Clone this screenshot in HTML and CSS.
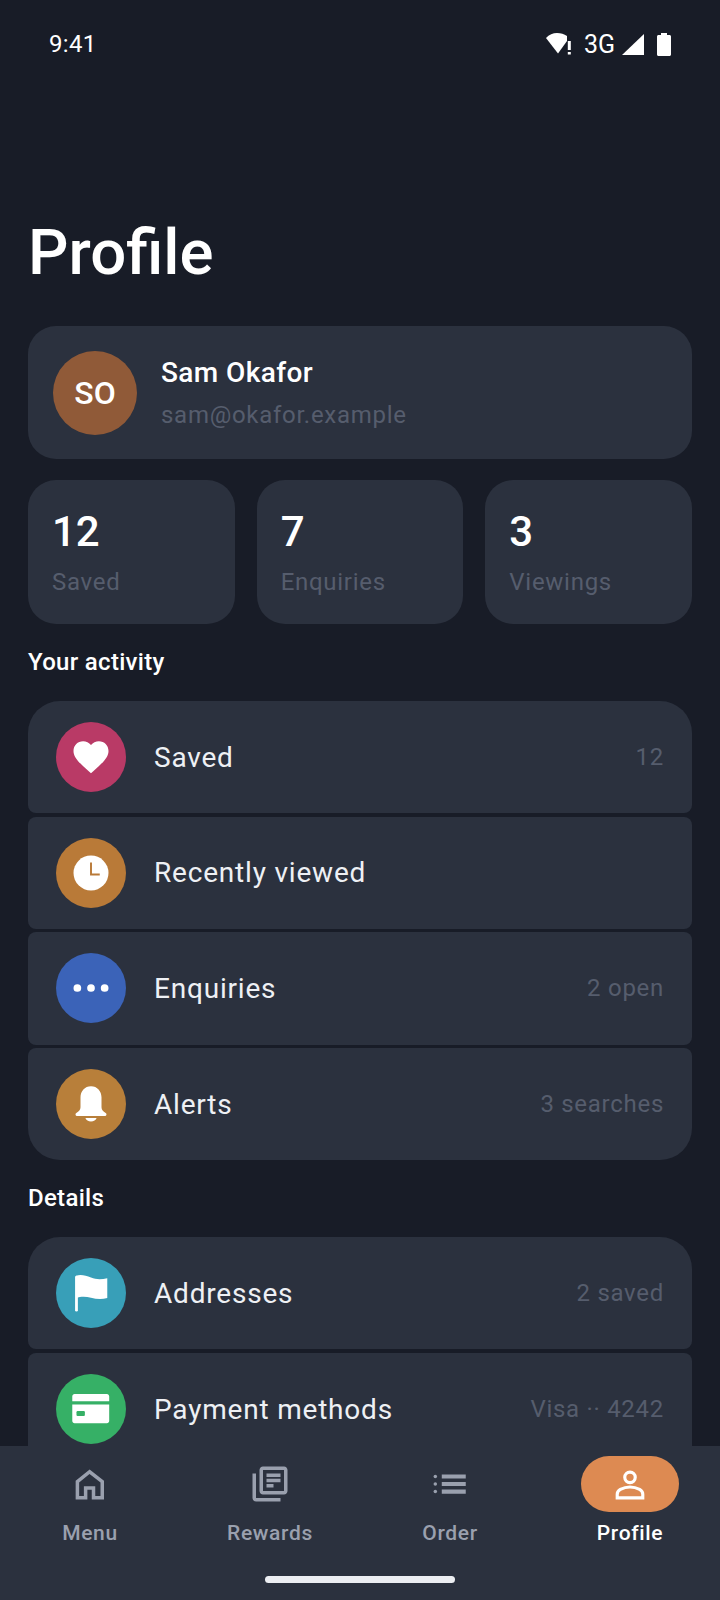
FILE: index.html
```html
<!doctype html>
<html>
<head>
<meta charset="utf-8">
<title>Profile</title>
<link rel="stylesheet" href="styles.css">
</head>
<body>
<div id="wrap">
	<div class="status">
		<span class="time">9:41</span>
		<div class="status_icons">
			<svg class="ic_wifi" width="27" height="24" viewBox="0 0 27 24"><path d="M1 6C4 2.500 8 1 12 1s7 1 10 3v5L13 21.500z" fill="#fff"/><rect x="22.800" y="9" width="3" height="9" fill="#fff"/><rect x="22.800" y="20" width="3" height="2.500" fill="#fff"/></svg>
			<span class="net">3G</span>
			<svg class="ic_signal" width="22" height="21" viewBox="0 0 22 21"><path d="M22 0v21H0z" fill="#fff"/></svg>
			<svg class="ic_batt" width="14" height="23" viewBox="0 0 14 23"><path d="M4 0h6v2h2.500c.8 0 1.500.7 1.500 1.500V21.500c0 .8-.7 1.500-1.500 1.500h-11C.7 23 0 22.300 0 21.500V3.500C0 2.700.7 2 1.500 2H4z" fill="#fff"/></svg>
		</div>
	</div>
	<div id="content">
		<h1>Profile</h1>
		<div class="user_card">
			<div class="avatar">SO</div>
			<div class="user_info">
				<div class="user_name">Sam Okafor</div>
				<div class="user_mail">sam@okafor.example</div>
			</div>
		</div>
		<div class="stats">
			<div class="stat"><b>12</b><span>Saved</span></div>
			<div class="stat"><b>7</b><span>Enquiries</span></div>
			<div class="stat"><b>3</b><span>Viewings</span></div>
		</div>
		<h2>Your activity</h2>
		<ul class="group">
			<li>
				<div class="dot dot_pink"><svg width="42" height="42" viewBox="0 0 24 24"><path d="M12 21.350l-1.450-1.320C5.400 15.360 2 12.280 2 8.500 2 5.420 4.420 3 7.500 3c1.740 0 3.410.81 4.500 2.090C13.090 3.810 14.760 3 16.500 3 19.580 3 22 5.420 22 8.500c0 3.780-3.400 6.860-8.550 11.540z" fill="#fff"/></svg></div>
				<span class="label">Saved</span>
				<span class="meta">12</span>
			</li>
			<li>
				<div class="dot dot_amber"><svg width="42" height="42" viewBox="0 0 24 24"><circle cx="12" cy="12" r="10" fill="#fff"/><path d="M12 6v6.900h5" fill="none" stroke="#b97a38" stroke-width="1.100"/></svg></div>
				<span class="label">Recently viewed</span>
			</li>
			<li>
				<div class="dot dot_blue"><svg width="42" height="42" viewBox="0 0 24 24"><circle cx="4.200" cy="12" r="2.200" fill="#fff"/><circle cx="12" cy="12" r="2.200" fill="#fff"/><circle cx="19.800" cy="12" r="2.200" fill="#fff"/></svg></div>
				<span class="label">Enquiries</span>
				<span class="meta">2 open</span>
			</li>
			<li>
				<div class="dot dot_gold"><svg width="42" height="42" viewBox="0 0 24 24"><path d="M12 1.800c-3.600 0-6 2.800-6 6.400v5.600c0 1.400-.9 2.400-2.400 3.300-.8.5-.5 1.700.4 1.700h16c.9 0 1.200-1.200.4-1.700-1.500-.9-2.400-1.900-2.400-3.300V8.200c0-3.600-2.400-6.400-6-6.400z" fill="#fff"/><path d="M8.800 20h6.400c-.4 1.300-1.700 2-3.200 2s-2.800-.7-3.200-2z" fill="#fff"/></svg></div>
				<span class="label">Alerts</span>
				<span class="meta">3 searches</span>
			</li>
		</ul>
		<h2>Details</h2>
		<ul class="group group_more">
			<li>
				<div class="dot dot_teal"><svg width="42" height="42" viewBox="0 0 24 24"><rect x="2.900" y="2.200" width="1.600" height="20.400" rx=".8" fill="#fff"/><path d="M3.500 2.200C6 1.200 9 2 12 3.200s6 1.200 9.300.3v11.400c-3.300.9-6.300.6-9.300-.2s-6-.8-8.500.2z" fill="#fff"/></svg></div>
				<span class="label">Addresses</span>
				<span class="meta">2 saved</span>
			</li>
			<li>
				<div class="dot dot_green"><svg width="42" height="42" viewBox="0 0 24 24"><path d="M2.600 3.400h18.500c.7 0 1.300.6 1.300 1.300v2.900H1.300V4.700c0-.7.6-1.300 1.300-1.300zM1.300 9.400h21.100v9.400c0 .7-.6 1.300-1.300 1.300H2.600c-.7 0-1.300-.6-1.300-1.300z" fill="#fff"/><rect x="3.700" y="13.200" width="4.800" height="2.800" rx=".6" fill="#36b066"/></svg></div>
				<span class="label">Payment methods</span>
				<span class="meta">Visa ·· 4242</span>
			</li>
		</ul>
	</div>
	<nav>
		<a href="#">
			<i><svg width="42" height="42" viewBox="0 0 24 24"><path d="M4.800 19.800v-9.200L11.800 5l7.200 5.600v9.200h-5v-5.500H9.500v5.500z" fill="none" stroke="#9aa0ae" stroke-width="2"/></svg></i>
			<span>Menu</span>
		</a>
		<a href="#">
			<i><svg width="42" height="42" viewBox="0 0 24 24"><path d="M4 6H2v14c0 1.100.9 2 2 2h14v-2H4zm16-4H8c-1.100 0-2 .9-2 2v12c0 1.100.9 2 2 2h12c1.100 0 2-.9 2-2V4c0-1.100-.9-2-2-2zm0 14H8V4h12zM10 9h8v2h-8zm0 3h4v2h-4zm0-6h8v2h-8z" fill="#9aa0ae"/></svg></i>
			<span>Rewards</span>
		</a>
		<a href="#">
			<i><svg width="42" height="42" viewBox="0 0 24 24"><path d="M7.300 6.600H21v2.300H7.300zm0 4.300H21v2.300H7.300zm0 4.300H21v2.300H7.300z" fill="#9aa0ae"/><circle cx="3.600" cy="7.700" r="1" fill="#9aa0ae"/><circle cx="3.600" cy="12" r="1" fill="#9aa0ae"/><circle cx="3.600" cy="16.300" r="1" fill="#9aa0ae"/></svg></i>
			<span>Order</span>
		</a>
		<a href="#" class="on">
			<i><svg width="42" height="42" viewBox="0 0 24 24"><circle cx="12" cy="8.200" r="3" fill="none" stroke="#fff" stroke-width="1.800"/><path d="M4.700 19.900v-2c0-1.300.7-2.200 1.800-2.800 1.700-.9 3.500-1.400 5.500-1.400s3.800.5 5.500 1.400c1.100.6 1.800 1.500 1.800 2.800v2z" fill="none" stroke="#fff" stroke-width="1.800"/></svg></i>
			<span>Profile</span>
		</a>
		<div class="home_bar"></div>
	</nav>
</div>
</body>
</html>
```

FILE: styles.css
```css
body,h1,h2,div,ul,li,a,span{margin: 0; padding: 0;}
ul{list-style: none;}
a{text-decoration: none;}
html,body{
	width: 720px;
	height: 1600px;
	overflow: hidden;
	background-color: #181c27;
	font-family: Roboto,"Noto Sans",sans-serif;
}
#wrap{
	width: 720px;
	height: 1600px;
	display: flex;
	flex-direction: column;
	overflow: hidden;
}
.status{
	height: 88px;
	flex: none;
	display: flex;
	align-items: center;
	justify-content: space-between;
	padding: 0 49px 0 49px;
	color: #fff;
}
.time{
	font-size: 24px;
	letter-spacing: .3px;
}
.status_icons{
	display: flex;
	align-items: center;
}
.net{
	font-size: 25px;
	margin: 0 7px 0 12px;
}
.ic_batt{
	margin-left: 13px;
}
#content{
	flex: 1;
	min-height: 0;
	overflow: hidden;
	padding: 0 28px;
}
h1{
	height: 238px;
	box-sizing: border-box;
	padding-top: 127px;
	font-size: 63.500px;
	line-height: 76px;
	font-weight: 500;
	color: #fff;
}
.user_card{
	height: 133px;
	display: flex;
	align-items: center;
	gap: 24px;
	padding: 0 25px;
	border-radius: 28px;
	background-color: #2b313e;
}
.avatar{
	width: 84px;
	height: 84px;
	border-radius: 50%;
	background-color: #905a38;
	color: #fff;
	font-size: 32px;
	font-weight: 500;
	line-height: 84px;
	text-align: center;
}
.user_name{
	font-size: 28px;
	font-weight: 500;
	line-height: 36px;
	color: #fff;
	letter-spacing: .4px;
}
.user_mail{
	margin-top: 8px;
	font-size: 24px;
	line-height: 32px;
	color: #565d6d;
	letter-spacing: .72px;
}
.stats{
	display: flex;
	gap: 22px;
	margin-top: 21px;
}
.stat{
	flex: 1;
	height: 144px;
	box-sizing: border-box;
	padding: 27px 24px 0;
	border-radius: 28px;
	background-color: #2b313e;
}
.stat b{
	display: block;
	font-size: 42px;
	line-height: 50px;
	font-weight: 500;
	color: #fff;
}
.stat span{
	display: block;
	margin-top: 9px;
	font-size: 24px;
	line-height: 32px;
	color: #565d6d;
	letter-spacing: .72px;
}
h2{
	height: 77px;
	font-size: 24px;
	font-weight: 500;
	line-height: 76px;
	color: #fff;
	letter-spacing: .3px;
}
.group{
	display: flex;
	flex-direction: column;
	gap: 3.500px;
}
.group li{
	height: 112.200px;
	flex: none;
	display: flex;
	align-items: center;
	padding: 0 28px;
	border-radius: 8px;
	background-color: #2b313e;
}
.group li:first-child{
	border-radius: 32px 32px 8px 8px;
}
.group li:last-child{
	border-radius: 8px 8px 32px 32px;
}
/* list carries on under the nav */
.group_more li:last-child{
	border-radius: 8px;
}
.dot{
	width: 70px;
	height: 70px;
	flex: none;
	border-radius: 50%;
	display: flex;
	align-items: center;
	justify-content: center;
}
.dot_pink{background-color: #b93a66;}
.dot_amber{background-color: #b97a38;}
.dot_blue{background-color: #3b63b8;}
.dot_gold{background-color: #b87f3a;}
.dot_teal{background-color: #389fb8;}
.dot_green{background-color: #36b066;}
.label{
	flex: 1;
	margin-left: 28px;
	font-size: 28px;
	color: #eef0f4;
	letter-spacing: .8px;
}
.meta{
	font-size: 24px;
	color: #565d6d;
	letter-spacing: .72px;
}
nav{
	height: 154px;
	flex: none;
	position: relative;
	display: flex;
	box-sizing: border-box;
	padding-top: 10px;
	background-color: #2b313e;
}
nav a{
	flex: 1;
	display: flex;
	flex-direction: column;
	align-items: center;
}
nav i{
	width: 98px;
	height: 56px;
	border-radius: 28px;
	display: flex;
	align-items: center;
	justify-content: center;
}
nav span{
	margin-top: 7px;
	font-size: 21px;
	line-height: 28px;
	font-weight: 500;
	color: #9aa0ae;
	letter-spacing: .65px;
}
nav .on i{
	background-color: #dd8a52;
}
nav .on span{
	color: #fff;
}
.home_bar{
	position: absolute;
	left: 265px;
	bottom: 17px;
	width: 190px;
	height: 7px;
	border-radius: 4px;
	background-color: #eceef2;
}
```
